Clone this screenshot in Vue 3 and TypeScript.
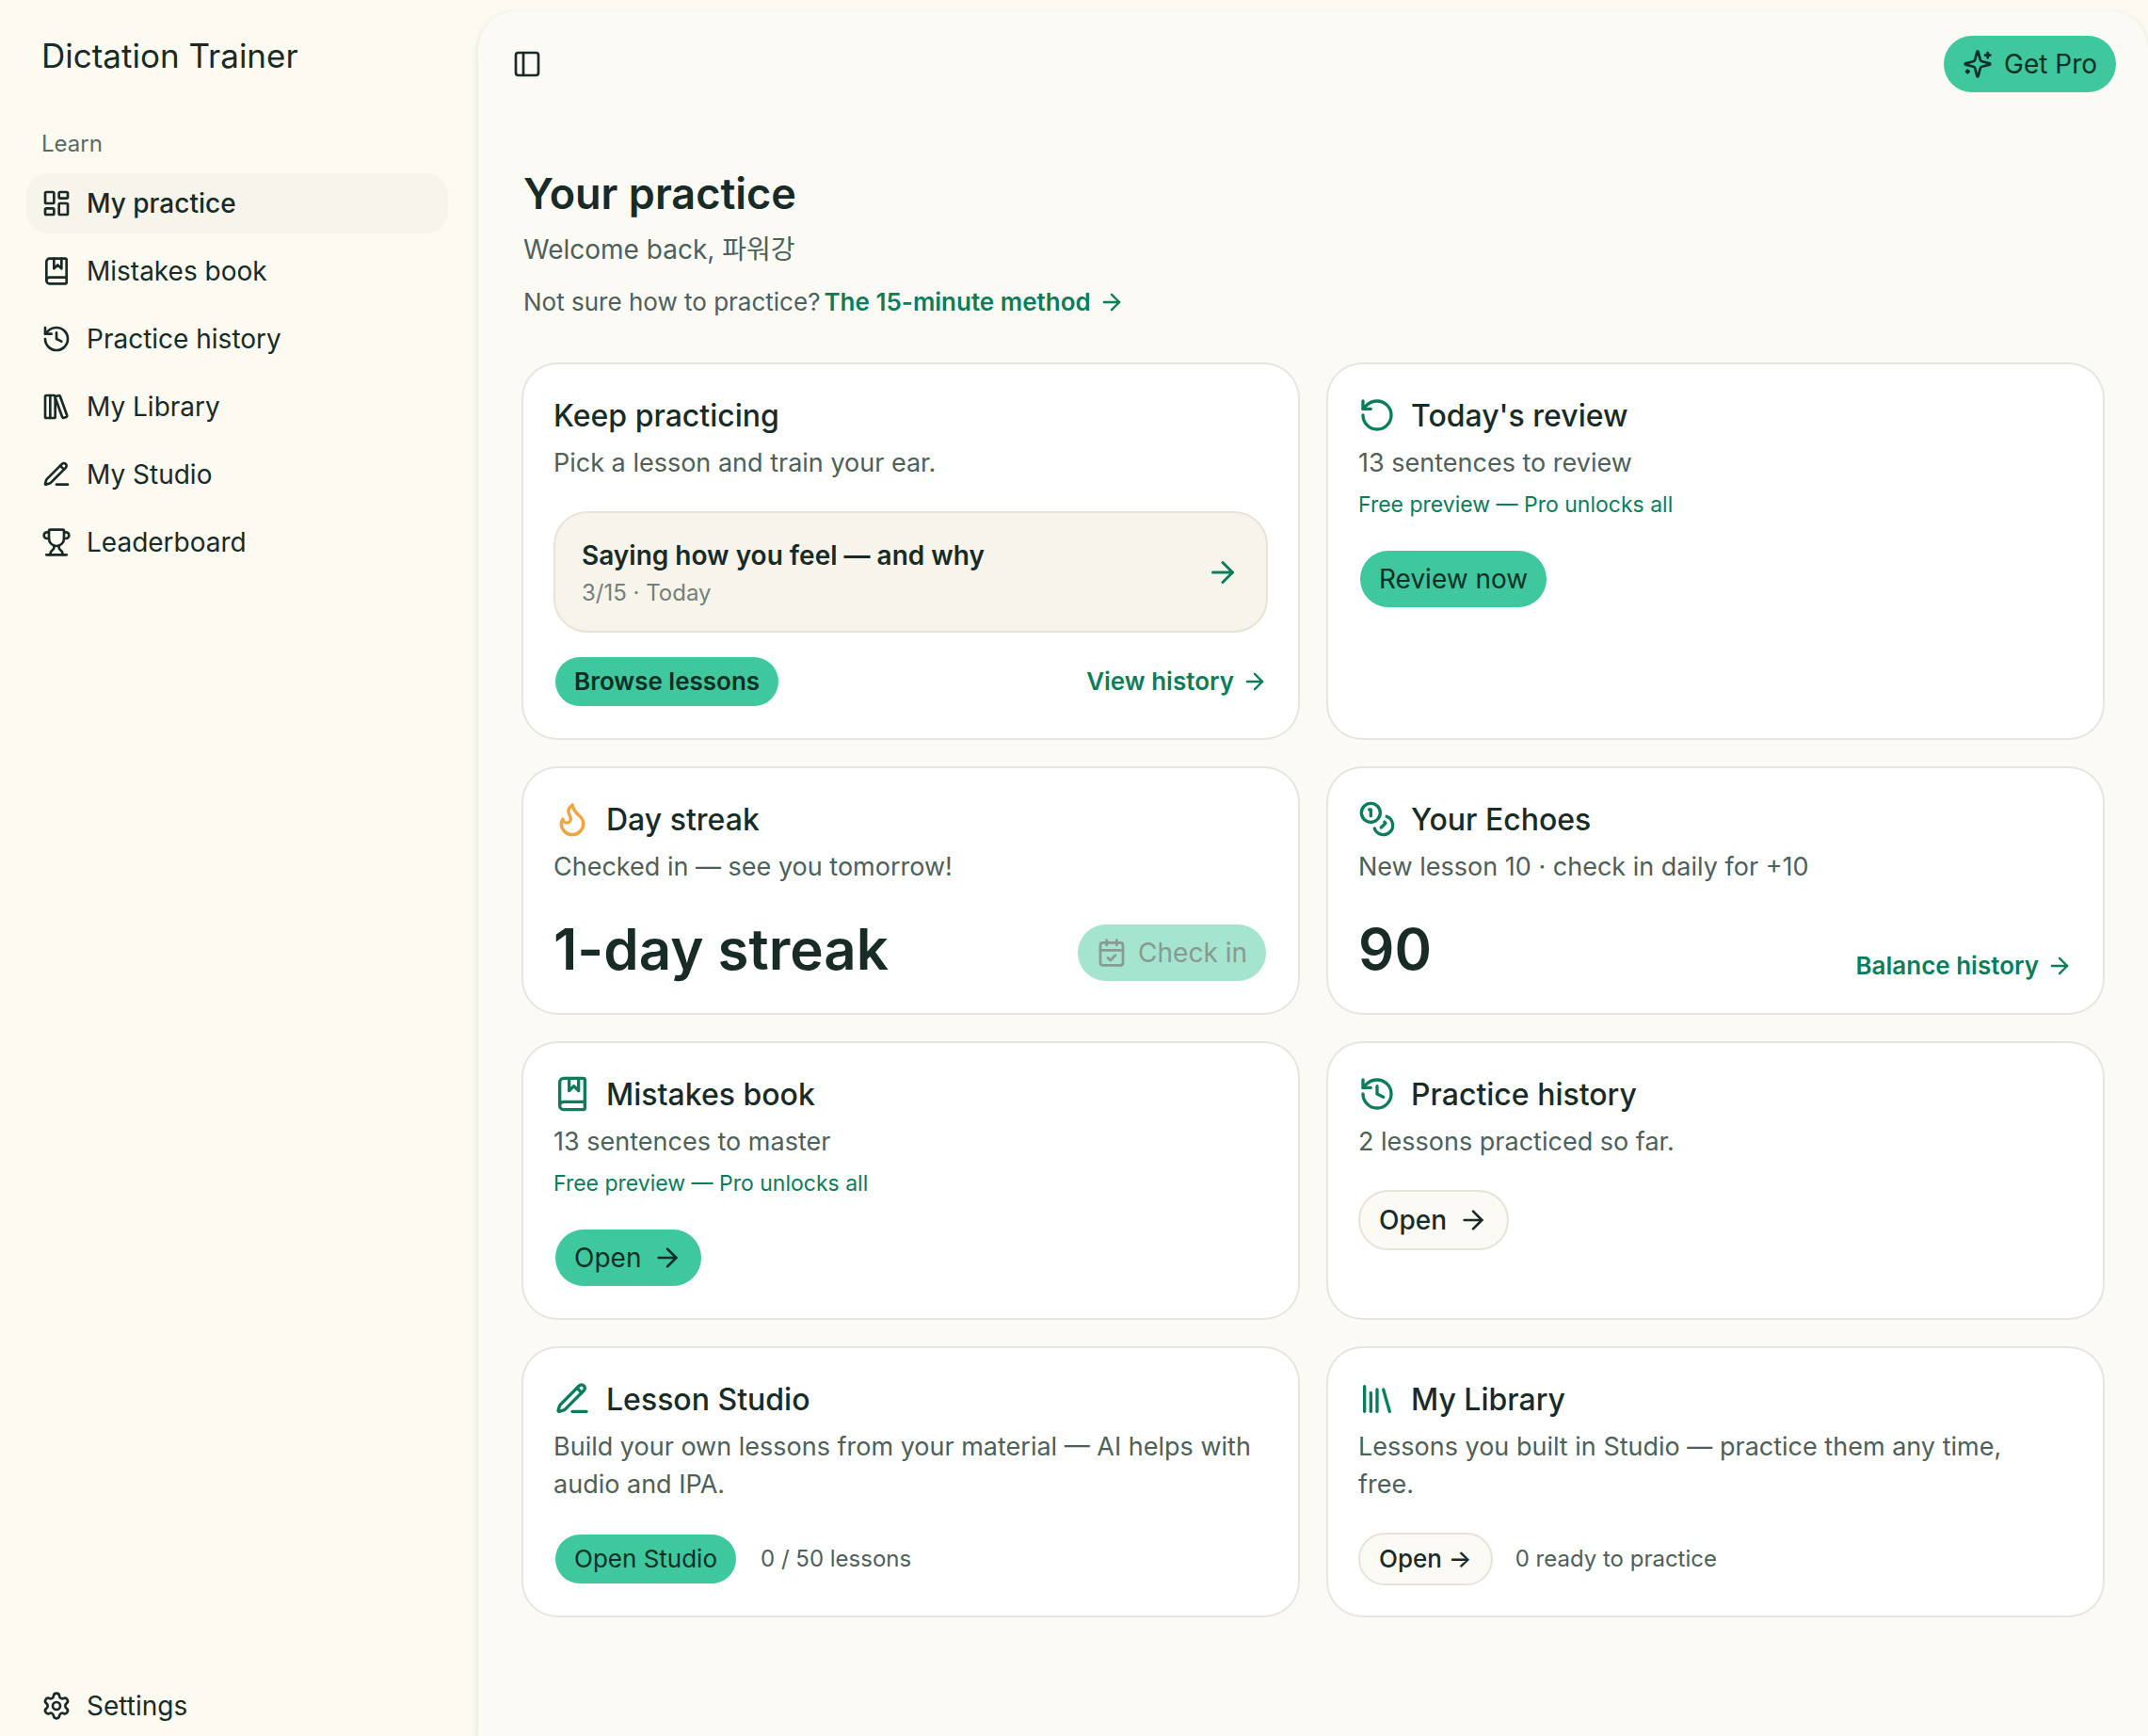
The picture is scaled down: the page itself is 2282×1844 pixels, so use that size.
<script setup lang="ts">
import { h, type FunctionalComponent } from 'vue'

const shapes = {
  dashboard: [
    'M4 3h5a1 1 0 0 1 1 1v7a1 1 0 0 1-1 1H4a1 1 0 0 1-1-1V4a1 1 0 0 1 1-1z',
    'M15 3h5a1 1 0 0 1 1 1v3a1 1 0 0 1-1 1h-5a1 1 0 0 1-1-1V4a1 1 0 0 1 1-1z',
    'M15 12h5a1 1 0 0 1 1 1v7a1 1 0 0 1-1 1h-5a1 1 0 0 1-1-1v-7a1 1 0 0 1 1-1z',
    'M4 16h5a1 1 0 0 1 1 1v3a1 1 0 0 1-1 1H4a1 1 0 0 1-1-1v-3a1 1 0 0 1 1-1z',
  ],
  book: [
    'M10 2v8l3-3 3 3V2',
    'M4 19.5v-15A2.5 2.5 0 0 1 6.5 2H19a1 1 0 0 1 1 1v18a1 1 0 0 1-1 1H6.5a1 1 0 0 1 0-5H20',
  ],
  history: ['M3 12a9 9 0 1 0 9-9 9.75 9.75 0 0 0-6.74 2.74L3 8', 'M3 3v5h5', 'M12 7v5l4 2'],
  shelf: [
    'M4 3h6a1 1 0 0 1 1 1v16a1 1 0 0 1-1 1H4a1 1 0 0 1-1-1V4a1 1 0 0 1 1-1z',
    'M7 3v18',
    'M20.4 18.9c.2.5-.1 1.1-.6 1.3l-1.9.7c-.5.2-1.1-.1-1.3-.6L11.1 5.1c-.2-.5.1-1.1.6-1.3l1.9-.7c.5-.2 1.1.1 1.3.6Z',
  ],
  pencil: [
    'M12 20h9',
    'M16.376 3.622a1 1 0 0 1 3.002 3.002L7.368 18.635a2 2 0 0 1-.855.506l-2.872.838a.5.5 0 0 1-.62-.62l.838-2.872a2 2 0 0 1 .506-.854z',
    'm15 5 3 3',
  ],
  trophy: [
    'M10 14.66v1.626a2 2 0 0 1-.976 1.696A5 5 0 0 0 7 21.978',
    'M14 14.66v1.626a2 2 0 0 0 .976 1.696A5 5 0 0 1 17 21.978',
    'M18 9h1.5a1 1 0 0 0 0-5H18',
    'M4 22h16',
    'M6 9a6 6 0 0 0 12 0V3a1 1 0 0 0-1-1H7a1 1 0 0 0-1 1z',
    'M6 9H4.5a1 1 0 0 1 0-5H6',
  ],
  settings: [
    'M9.671 4.136a2.34 2.34 0 0 1 4.659 0 2.34 2.34 0 0 0 3.319 1.915 2.34 2.34 0 0 1 2.33 4.033 2.34 2.34 0 0 0 0 3.831 2.34 2.34 0 0 1-2.33 4.033 2.34 2.34 0 0 0-3.319 1.915 2.34 2.34 0 0 1-4.659 0 2.34 2.34 0 0 0-3.32-1.915 2.34 2.34 0 0 1-2.33-4.033 2.34 2.34 0 0 0 0-3.831A2.34 2.34 0 0 1 6.35 6.051a2.34 2.34 0 0 0 3.319-1.915',
    'M15 12a3 3 0 1 1-6 0 3 3 0 0 1 6 0z',
  ],
  panel: ['M5 3h14a2 2 0 0 1 2 2v14a2 2 0 0 1-2 2H5a2 2 0 0 1-2-2V5a2 2 0 0 1 2-2z', 'M9 3v18'],
  sparkles: [
    'M9.937 15.5A2 2 0 0 0 8.5 14.063l-6.135-1.582a.5.5 0 0 1 0-.962L8.5 9.936A2 2 0 0 0 9.937 8.5l1.582-6.135a.5.5 0 0 1 .963 0L14.063 8.5A2 2 0 0 0 15.5 9.937l6.135 1.581a.5.5 0 0 1 0 .964L15.5 14.063a2 2 0 0 0-1.437 1.437l-1.582 6.135a.5.5 0 0 1-.963 0z',
    'M20 3v4',
    'M22 5h-4',
    'M4 17v2',
    'M5 18H3',
  ],
  arrow: ['M5 12h14', 'm12 5 7 7-7 7'],
  undo: ['M3 12a9 9 0 1 0 9-9 9.75 9.75 0 0 0-6.74 2.74L3 8', 'M3 3v5h5'],
  flame: ['M12 3q1 4 4 6.5t3 5.5a1 1 0 0 1-14 0 5 5 0 0 1 1-3 1 1 0 0 0 5 0c0-2-1.5-3-1.5-5q0-2 2.5-4'],
  coins: [
    'M14 8A6 6 0 1 1 2 8a6 6 0 0 1 12 0z',
    'M18.09 10.37A6 6 0 1 1 10.34 18',
    'M7 6h1v4',
    'm16.71 13.88.7.71-2.82 2.82',
  ],
  calendar: [
    'M8 2v4',
    'M16 2v4',
    'M5 4h14a2 2 0 0 1 2 2v14a2 2 0 0 1-2 2H5a2 2 0 0 1-2-2V6a2 2 0 0 1 2-2z',
    'M3 10h18',
    'm9 16 2 2 4-4',
  ],
  library: ['m16 6 4 14', 'M12 6v14', 'M8 8v12', 'M4 4v16'],
}

type IconName = keyof typeof shapes

const Icon: FunctionalComponent<{ name: IconName; size: number }> = (props) =>
  h(
    'svg',
    {
      width: props.size,
      height: props.size,
      viewBox: '0 0 24 24',
      fill: 'none',
      stroke: 'currentColor',
      'stroke-width': 2,
      'stroke-linecap': 'round',
      'stroke-linejoin': 'round',
      'aria-hidden': 'true',
    },
    shapes[props.name].map((d) => h('path', { d })),
  )
Icon.props = ['name', 'size']

const links: { label: string; icon: IconName; active?: boolean }[] = [
  { label: 'My practice', icon: 'dashboard', active: true },
  { label: 'Mistakes book', icon: 'book' },
  { label: 'Practice history', icon: 'history' },
  { label: 'My Library', icon: 'shelf' },
  { label: 'My Studio', icon: 'pencil' },
  { label: 'Leaderboard', icon: 'trophy' },
]
</script>

<template>
  <div class="app">
    <aside class="sidebar">
      <div class="brand">Dictation Trainer</div>
      <div class="group">Learn</div>
      <nav class="nav">
        <a v-for="link in links" :key="link.label" href="#" class="nav-link" :class="{ active: link.active }">
          <Icon :name="link.icon" :size="32" />
          <span>{{ link.label }}</span>
        </a>
      </nav>
      <a href="#" class="nav-link settings">
        <Icon name="settings" :size="32" />
        <span>Settings</span>
      </a>
    </aside>

    <div class="panel">
      <header class="topbar">
        <button type="button" class="toggle" aria-label="Toggle sidebar"><Icon name="panel" :size="32" /></button>
        <button type="button" class="btn"><Icon name="sparkles" :size="32" />Get Pro</button>
      </header>

      <main class="content">
        <h1>Your practice</h1>
        <p class="welcome">Welcome back, 파워강</p>
        <p class="hint">
          Not sure how to practice?
          <a href="#" class="link">The 15-minute method <Icon name="arrow" :size="28" /></a>
        </p>

        <div class="grid">
          <section class="card">
            <h2>Keep practicing</h2>
            <p class="desc">Pick a lesson and train your ear.</p>
            <div class="body">
              <a href="#" class="lesson">
                <span class="lesson-text">
                  <strong>Saying how you feel — and why</strong>
                  <small>3/15 · Today</small>
                </span>
                <Icon name="arrow" :size="36" />
              </a>
              <div class="split">
                <button type="button" class="btn small strong">Browse lessons</button>
                <a href="#" class="link">View history <Icon name="arrow" :size="28" /></a>
              </div>
            </div>
          </section>

          <section class="card">
            <h2><Icon name="undo" :size="40" />Today's review</h2>
            <p class="desc">13 sentences to review</p>
            <p class="note">Free preview — Pro unlocks all</p>
            <div class="body">
              <button type="button" class="btn">Review now</button>
            </div>
          </section>

          <section class="card">
            <h2><Icon name="flame" :size="40" class="warm" />Day streak</h2>
            <p class="desc">Checked in — see you tomorrow!</p>
            <div class="body split end">
              <span class="figure">1-day streak</span>
              <button type="button" class="btn" disabled><Icon name="calendar" :size="32" />Check in</button>
            </div>
          </section>

          <section class="card">
            <h2><Icon name="coins" :size="40" />Your Echoes</h2>
            <p class="desc">New lesson 10 · check in daily for +10</p>
            <div class="body split end">
              <span class="figure">90</span>
              <a href="#" class="link">Balance history <Icon name="arrow" :size="28" /></a>
            </div>
          </section>

          <section class="card">
            <h2><Icon name="book" :size="40" />Mistakes book</h2>
            <p class="desc">13 sentences to master</p>
            <p class="note">Free preview — Pro unlocks all</p>
            <div class="body">
              <button type="button" class="btn">Open <Icon name="arrow" :size="32" /></button>
            </div>
          </section>

          <section class="card">
            <h2><Icon name="history" :size="40" />Practice history</h2>
            <p class="desc">2 lessons practiced so far.</p>
            <div class="body">
              <button type="button" class="btn outline">Open <Icon name="arrow" :size="32" /></button>
            </div>
          </section>

          <section class="card">
            <h2><Icon name="pencil" :size="40" />Lesson Studio</h2>
            <p class="desc">Build your own lessons from your material — AI helps with audio and IPA.</p>
            <div class="body row">
              <button type="button" class="btn small">Open Studio</button>
              <span class="count">0 / 50 lessons</span>
            </div>
          </section>

          <section class="card">
            <h2><Icon name="library" :size="40" />My Library</h2>
            <p class="desc">Lessons you built in Studio — practice them any time, free.</p>
            <div class="body row">
              <button type="button" class="btn small outline">Open →</button>
              <span class="count">0 ready to practice</span>
            </div>
          </section>
        </div>
      </main>
    </div>
  </div>
</template>

<style>
body {
  margin: 0;
  background: #fdfaf2;
}
</style>

<style scoped>
.app {
  display: flex;
  min-height: 100vh;
  background: #fdfaf2;
  color: #182b26;
  font-family: Inter, 'Noto Sans CJK KR', sans-serif;
  font-size: 28px;
  line-height: 42px;
}

.app * {
  box-sizing: border-box;
}

h1,
h2,
p {
  margin: 0;
}

a {
  color: inherit;
  text-decoration: none;
}

svg {
  display: block;
  flex: none;
}

.sidebar {
  position: sticky;
  top: 0;
  box-sizing: border-box;
  display: flex;
  flex: none;
  flex-direction: column;
  width: 508px;
  height: 100vh;
  padding: 32px 32px 0 28px;
}

.brand {
  padding-left: 16px;
  font-size: 35px;
  line-height: 54px;
}

.group {
  margin-top: 36px;
  padding-left: 16px;
  color: #596b64;
  font-size: 24px;
  line-height: 62px;
}

.nav {
  display: flex;
  flex-direction: column;
  gap: 8px;
}

.nav-link {
  display: flex;
  align-items: center;
  gap: 16px;
  height: 64px;
  padding: 0 16px;
  border-radius: 24px;
}

.nav-link.active {
  background: #f7f4ec;
  font-weight: 500;
}

.settings {
  margin-top: auto;
}

.panel {
  flex: 1;
  min-width: 0;
  margin-top: 12px;
  border-radius: 40px 40px 0 0;
  background: #fcfaf5;
  box-shadow: 0 2px 6px rgb(0 0 0 / 12%);
}

.topbar {
  display: flex;
  align-items: center;
  justify-content: space-between;
  height: 112px;
  padding: 0 32px 0 20px;
}

.toggle {
  display: grid;
  place-items: center;
  width: 64px;
  height: 64px;
  padding: 0;
  border: 0;
  border-radius: 24px;
  background: none;
  color: inherit;
}

.content {
  padding: 48px;
}

h1 {
  font-size: 45px;
  font-weight: 600;
  line-height: 68px;
}

.welcome {
  margin-top: 4px;
  color: #4d6059;
}

.hint {
  display: flex;
  align-items: center;
  gap: 4px;
  margin-top: 14px;
  color: #4d6059;
  font-size: 26px;
}

.link {
  display: flex;
  align-items: center;
  gap: 8px;
  color: #0a7d5a;
  font-size: 26px;
  font-weight: 600;
  line-height: 36px;
}

.grid {
  display: grid;
  grid-template-columns: 1fr 1fr;
  gap: 32px;
  margin-top: 45px;
}

.card {
  padding: 32px;
  border-radius: 36px;
  background: #fff;
  box-shadow: 0 0 0 2px #e4e6df;
}

h2 {
  display: flex;
  align-items: center;
  gap: 16px;
  font-size: 32px;
  font-weight: 500;
  line-height: 46px;
}

h2 svg {
  margin-bottom: 2px;
  color: #0a7d5a;
}

h2 .warm {
  color: #f2a341;
}

.desc {
  margin-top: 7px;
  padding-right: 14px;
  color: #4d6059;
  font-size: 27px;
  line-height: 40px;
}

.note {
  margin-top: 8px;
  color: #0a7d5a;
  font-size: 23px;
  line-height: 32px;
}

.body {
  margin-top: 31px;
}

.row {
  display: flex;
  align-items: center;
  gap: 24px;
}

.split {
  display: flex;
  align-items: center;
  justify-content: space-between;
}

.split.end {
  align-items: flex-end;
}

.lesson {
  display: flex;
  align-items: center;
  justify-content: space-between;
  margin-bottom: 24px;
  padding: 24px 28px;
  border: 2px solid #e7e3d8;
  border-radius: 36px;
  background: #f7f4ec;
}

.lesson-text {
  display: flex;
  flex-direction: column;
  gap: 3px;
}

.lesson strong {
  font-size: 28px;
  font-weight: 600;
}

.lesson small {
  color: #73817a;
  font-size: 24px;
  line-height: 32px;
}

.lesson svg {
  color: #0a7d5a;
}

.btn {
  display: inline-flex;
  align-items: center;
  gap: 12px;
  height: 64px;
  padding: 0 20px;
  border: 2px solid transparent;
  border-radius: 32px;
  background: #3fc79d;
  background-clip: padding-box;
  color: #0d2f26;
  font-family: inherit;
  font-size: 28px;
  font-weight: 400;
  line-height: 40px;
  white-space: nowrap;
}

.btn.small {
  height: 56px;
  font-size: 26px;
}

.btn.strong {
  font-weight: 600;
}

.btn.outline {
  border-color: #e7e3da;
  background: #fcfaf5;
  color: #182b26;
  font-weight: 500;
}

.btn:disabled {
  background-color: #a5e4cf;
  color: #879a93;
}

.figure {
  font-size: 60px;
  font-weight: 600;
  line-height: 72px;
}

.count {
  color: #4d6059;
  font-size: 24px;
  line-height: 32px;
}
</style>
